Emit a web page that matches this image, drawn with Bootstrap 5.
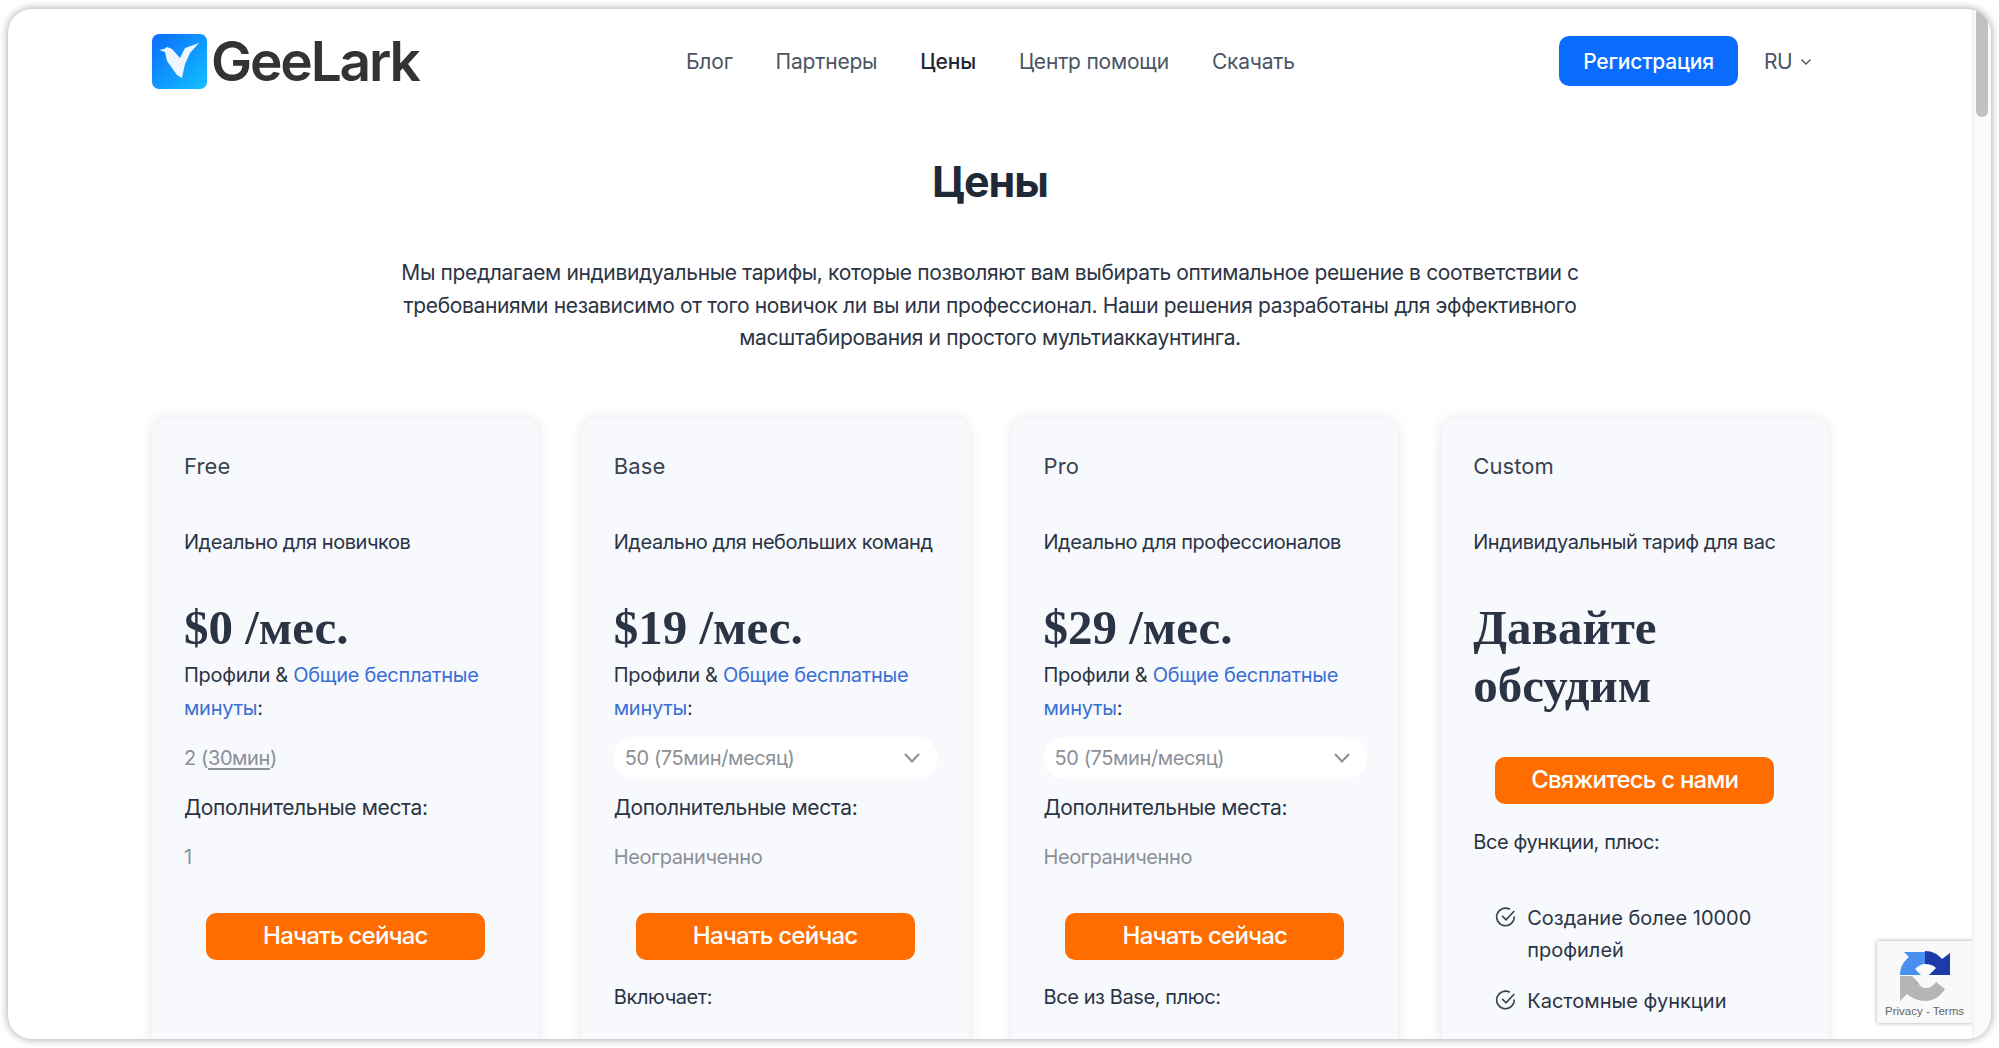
<!DOCTYPE html>
<html lang="ru">
<head>
  <meta charset="UTF-8">
  <meta name="viewport" content="width=device-width, initial-scale=1.0">
  <title>GeeLark - Цены</title>
  <link href="https://cdn.jsdelivr.net/npm/bootstrap@5.3.0/dist/css/bootstrap.min.css" rel="stylesheet">
  <style>
    html, body { height: 100%; overflow: hidden; }
    body {
      background: #fff;
      padding: 9px 8px 8px;
      font-family: Inter, "Noto Sans", sans-serif;
      color: #2b3444;
      font-size: 20px;
      letter-spacing: -0.4px;
    }
    .app-window {
      height: 1030px;
      border-radius: 24px;
      overflow: hidden;
      background: #fff;
      box-shadow: 0 0 8px rgba(0,0,0,.38);
      position: relative;
    }
    .page-area { flex: 1 1 auto; min-width: 0; overflow: hidden; position: relative; }
    .fake-scroll { width: 19px; background: #fafafa; border-left: 1px solid #ececec; flex: none; padding: 0 3px; }
    .fake-scroll div { height: 108px; background: #c1c1c1; border-radius: 0 0 6px 6px; }
    .site-head { height: 104px; padding: 0 144px 0 144px; }
    .brand-name { font-size: 55px; font-weight: 600; color: #333; letter-spacing: -2.2px; line-height: 1; }
    .brand-link { gap: 4px; width: 269px; }
    .menu-links { gap: 43px; margin-left: 265px; padding-top: 2px; }
    .menu-links a { color: #4b5563; text-decoration: none; font-size: 21px; letter-spacing: -0.2px; }
    .menu-links a.on { color: #1f2937; font-weight: 500; }
    .btn-reg {
      background: #0a6cff; color: #fff; border: 0; border-radius: 10px;
      height: 50px; width: 179px; padding-top: 8px; font-size: 21px; font-weight: 500; letter-spacing: -0.2px;
    }
    .btn-reg:hover { background: #0a6cff; color: #fff; }
    .lang-pick { color: #4b5563; font-size: 21px; margin-left: 26px; margin-right: 6px; padding-top: 2px; width: 58px; gap: 8px; }
    .price-title { font-size: 43px; font-weight: 700; color: #1f2937; line-height: 1; margin: 47px 0 0; letter-spacing: -1px; }
    .price-intro { width: 1200px; margin: 54px auto 0; line-height: 32.5px; font-size: 21px; letter-spacing: -0.36px; color: #2b3444; }
    .plans { margin: 63px 144px 0; gap: 43px; }
    .plan-box {
      flex: 1 1 0; min-width: 0; height: 900px;
      background: #f7f9fd; border: 0; border-radius: 16px;
      box-shadow: 0 0 14px rgba(0,0,0,.1);
      padding: 0 32px;
    }
    .plan-name { font-size: 22px; line-height: 32px; margin-top: 32px; color: #3a4352; letter-spacing: .1px; }
    .plan-for { line-height: 32px; margin-top: 44px; font-size: 20px; letter-spacing: -0.45px; }
    .plan-price {
      font-family: "Liberation Serif", serif; font-weight: 700; font-size: 49px; line-height: 58px;
      margin-top: 41px; color: #2b3444; letter-spacing: 0;
    }
    .plan-label { line-height: 33px; margin-top: 2px; letter-spacing: -0.3px; }
    .plan-label a { color: #3b6fd4; text-decoration: none; }
    .plan-muted { color: #8b9098; line-height: 32px; margin-top: 17px; padding-bottom: 1px; }
    .plan-select {
      background: #fff; border-radius: 20px; height: 42px; margin: 12px 0 0;
      padding: 0 16px 0 11px; color: #8b9098; width: 323px;
    }
    .plan-plain { background: transparent; padding: 0; }
    .plan-plain u { text-underline-offset: 3px; }
    .plan-extra { line-height: 32px; margin-top: 13px; font-size: 21px; letter-spacing: -0.36px; }
    .btn-go {
      display: block; background: #ff6d00; color: #fff; border: 0; border-radius: 10px;
      width: 279px; height: 47px; margin: 39px auto 0; padding: 0; font-size: 24px; font-weight: 500; letter-spacing: -0.8px;
    }
    .btn-go:hover { background: #ff6d00; color: #fff; }
    .btn-talk { margin-top: 42px; }
    .plan-inc { margin-top: 21px; line-height: 32px; }
    .talk-free { margin-top: 22px; line-height: 32px; }
    .perk-list { margin: 44px 0 0; padding: 0 0 0 22px; list-style: none; }
    .perk-list li { display: flex; gap: 10px; line-height: 32.5px; margin-bottom: 18px; letter-spacing: 0; }
    .perk-list svg { flex: none; margin-top: 4px; }
    .captcha-box {
      position: absolute; right: 0; bottom: 16px; width: 95px; height: 82px;
      background: #f9f9f9; box-shadow: 0 0 4px rgba(0,0,0,.35); border-radius: 2px 0 0 2px;
      text-align: center; font-family: "Liberation Sans", sans-serif; font-size: 11.5px; line-height: 14px; color: #666; letter-spacing: 0;
      padding-top: 10px; white-space: nowrap;
    }
    .captcha-box svg { display: block; margin: 0 auto 3px; }
  </style>
</head>
<body>
  <div class="app-window d-flex">
    <div class="page-area">
      <nav class="site-head d-flex align-items-center">
        <a class="brand-link d-flex align-items-center text-decoration-none" href="#">
          <svg width="55" height="55" viewBox="0 0 55 55">
            <defs><linearGradient id="lg" x1="0" y1="0" x2="1" y2="1"><stop offset="0" stop-color="#0a6cff"/><stop offset="1" stop-color="#14c0ff"/></linearGradient></defs>
            <rect width="55" height="55" rx="7" fill="url(#lg)"/>
            <path d="M7 16 L12 15 L15 13 L20 15 L28 24 L33 14 L47 9 L38 19 L33 30 L30 44 L25 41 L15 27 L13 18 Z" fill="#eef5fd"/>
          </svg>
          <span class="brand-name">GeeLark</span>
        </a>
        <div class="menu-links d-flex">
          <a href="#">Блог</a>
          <a href="#">Партнеры</a>
          <a href="#" class="on">Цены</a>
          <a href="#">Центр помощи</a>
          <a href="#">Скачать</a>
        </div>
        <button class="btn btn-reg ms-auto" type="button">Регистрация</button>
        <div class="lang-pick d-flex align-items-center">RU
          <svg width="12" height="8" viewBox="0 0 12 8"><path d="M1.5 1.5 L6 6 L10.5 1.5" fill="none" stroke="#4b5563" stroke-width="1.4"/></svg>
        </div>
      </nav>

      <h1 class="price-title text-center">Цены</h1>
      <p class="price-intro text-center">Мы предлагаем индивидуальные тарифы, которые позволяют вам выбирать оптимальное решение в соответствии с требованиями независимо от того новичок ли вы или профессионал. Наши решения разработаны для эффективного масштабирования и простого мультиаккаунтинга.</p>

      <div class="plans d-flex align-items-start">
        <div class="card plan-box">
          <div class="plan-name">Free</div>
          <div class="plan-for">Идеально для новичков</div>
          <div class="plan-price">$0 /мес.</div>
          <div class="plan-label">Профили &amp; <a href="#">Общие бесплатные минуты</a>:</div>
          <div class="plan-select plan-plain d-flex align-items-center"><span>2 (<u>30мин</u>)</span></div>
          <div class="plan-extra">Дополнительные места:</div>
          <div class="plan-muted">1</div>
          <button class="btn btn-go" type="button">Начать сейчас</button>
        </div>

        <div class="card plan-box">
          <div class="plan-name">Base</div>
          <div class="plan-for">Идеально для небольших команд</div>
          <div class="plan-price">$19 /мес.</div>
          <div class="plan-label">Профили &amp; <a href="#">Общие бесплатные минуты</a>:</div>
          <div class="plan-select d-flex align-items-center justify-content-between">50 (75мин/месяц)
            <svg width="18" height="12" viewBox="0 0 18 12"><path d="M2 2 L9 9.5 L16 2" fill="none" stroke="#8b9098" stroke-width="2"/></svg>
          </div>
          <div class="plan-extra">Дополнительные места:</div>
          <div class="plan-muted">Неограниченно</div>
          <button class="btn btn-go" type="button">Начать сейчас</button>
          <div class="plan-inc">Включает:</div>
        </div>

        <div class="card plan-box">
          <div class="plan-name">Pro</div>
          <div class="plan-for">Идеально для профессионалов</div>
          <div class="plan-price">$29 /мес.</div>
          <div class="plan-label">Профили &amp; <a href="#">Общие бесплатные минуты</a>:</div>
          <div class="plan-select d-flex align-items-center justify-content-between">50 (75мин/месяц)
            <svg width="18" height="12" viewBox="0 0 18 12"><path d="M2 2 L9 9.5 L16 2" fill="none" stroke="#8b9098" stroke-width="2"/></svg>
          </div>
          <div class="plan-extra">Дополнительные места:</div>
          <div class="plan-muted">Неограниченно</div>
          <button class="btn btn-go" type="button">Начать сейчас</button>
          <div class="plan-inc">Все из Base, плюс:</div>
        </div>

        <div class="card plan-box">
          <div class="plan-name">Custom</div>
          <div class="plan-for">Индивидуальный тариф для вас</div>
          <div class="plan-price">Давайте обсудим</div>
          <button class="btn btn-go btn-talk" type="button">Свяжитесь с нами</button>
          <div class="talk-free">Все функции, плюс:</div>
          <ul class="perk-list">
            <li>
              <svg width="22" height="22" viewBox="0 0 20 20"><path d="M17.5 9.5 A8 8 0 1 1 13.5 3" fill="none" stroke="#3a4352" stroke-width="1.5"/><path d="M6.5 9 L10 12.5 L17.5 4.5" fill="none" stroke="#3a4352" stroke-width="1.5"/></svg>
              <span>Создание более 10000 профилей</span>
            </li>
            <li>
              <svg width="22" height="22" viewBox="0 0 20 20"><path d="M17.5 9.5 A8 8 0 1 1 13.5 3" fill="none" stroke="#3a4352" stroke-width="1.5"/><path d="M6.5 9 L10 12.5 L17.5 4.5" fill="none" stroke="#3a4352" stroke-width="1.5"/></svg>
              <span>Кастомные функции</span>
            </li>
          </ul>
        </div>
      </div>

      <div class="captcha-box">
        <svg width="50" height="50" viewBox="0 0 50 50">
          <path d="M0 24 C0 16 4 10 9 6 L4 1 H25 V13 C21 13 18 15 15 18 L21 24 Z" fill="#4a90f0"/>
          <path d="M25 0 C32 0 38 3 42 8 L50 2 V24 H29 L36 17 C33 14 30 13 25 13 Z" fill="#1c3aa9"/>
          <path d="M0 25 H12 L18 31 C20 35 22 37 26 37 C30 37 33 35 36 31 L45 38 C40 46 33 50 25 50 C18 50 12 47 7 43 L0 50 Z" fill="#b5b5b5"/>
        </svg>
        Privacy - Terms
      </div>
    </div>
    <div class="fake-scroll"><div></div></div>
  </div>
</body>
</html>
